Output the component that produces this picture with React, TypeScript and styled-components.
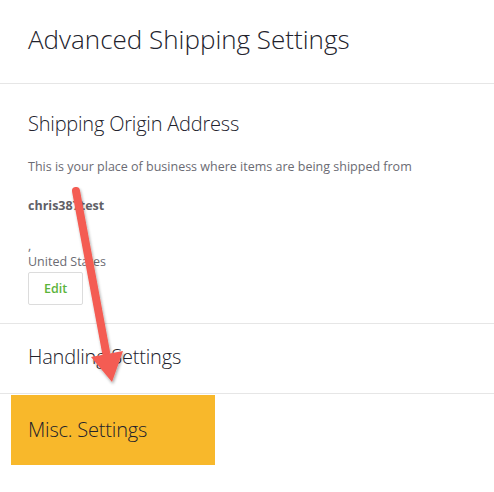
import React, { FC } from 'react';
import styled, { createGlobalStyle } from 'styled-components';

const GlobalStyle = createGlobalStyle`
  html, body {
    margin: 0;
    padding: 0;
    background: #ffffff;
  }
  body {
    font-family: 'Open Sans', 'Noto Sans', sans-serif;
    color: #2b2b36;
  }
`;

const Page = styled.div`
  position: relative;
  width: 494px;
  height: 492px;
  overflow: hidden;
  background: #ffffff;
`;

const Header = styled.header`
  height: 84px;
  box-sizing: border-box;
  padding: 22px 28px 0;
  border-bottom: 1px solid #e6e6e6;
`;

const Title = styled.h1`
  margin: 0;
  font-size: 26px;
  font-weight: 300;
  line-height: 34px;
  letter-spacing: 0;
  color: #22222c;
`;

const Section = styled.section<{ $height: number }>`
  height: ${p => p.$height}px;
  box-sizing: border-box;
  padding: 0 28px;
  border-bottom: 1px solid #e6e6e6;
  display: flex;
  flex-direction: column;
`;

const SectionTitle = styled.h2`
  margin: 0;
  font-size: 20px;
  font-weight: 300;
  line-height: 28px;
  letter-spacing: -0.2px;
  color: #22222c;
`;

const Description = styled.p`
  margin: 20px 0 0;
  font-size: 12.5px;
  line-height: 18px;
  color: #6b6b73;
`;

const Company = styled.div`
  margin-top: 21px;
  font-size: 12.5px;
  font-weight: 700;
  line-height: 18px;
  color: #606066;
`;

const AddressLine = styled.div`
  font-size: 12.5px;
  line-height: 16px;
  color: #6b6b73;
`;

const EditButton = styled.button`
  width: 55px;
  height: 33px;
  margin-top: 2px;
  padding: 0;
  background: #ffffff;
  border: 1px solid #dcdcdc;
  border-radius: 2px;
  font-family: inherit;
  font-size: 12.5px;
  font-weight: 600;
  color: #5cb43b;
`;

const MiscItem = styled.div`
  width: 204px;
  height: 70px;
  margin: 1px 0 0 11px;
  box-sizing: border-box;
  padding: 0 17px;
  background: #f8b82b;
  display: flex;
  align-items: center;
`;

const ArrowLayer = styled.svg`
  position: absolute;
  left: 0;
  top: 0;
  pointer-events: none;
`;

const Arrow: FC = () => (
  <ArrowLayer width={494} height={492} viewBox="0 0 494 492">
    <defs>
      <filter id="shadow" x="-50%" y="-50%" width="200%" height="200%">
        <feDropShadow dx="1" dy="2" stdDeviation="1.5" floodColor="#000" floodOpacity="0.35" />
      </filter>
    </defs>
    <g filter="url(#shadow)">
      <line x1={76} y1={191} x2={106} y2={352} stroke="#f45b52" strokeWidth={8} strokeLinecap="round" />
      <polygon points="91,357 123,351 112,382" fill="#f45b52" />
    </g>
  </ArrowLayer>
);

const App: FC = () => (
  <Page>
    <GlobalStyle />
    <Header>
      <Title>Advanced Shipping Settings</Title>
    </Header>
    <Section $height={240}>
      <SectionTitle style={{ marginTop: 26 }}>Shipping Origin Address</SectionTitle>
      <Description>This is your place of business where items are being shipped from</Description>
      <Company>chris387test</Company>
      <AddressLine style={{ marginTop: 23 }}>,</AddressLine>
      <AddressLine>United States</AddressLine>
      <EditButton>Edit</EditButton>
    </Section>
    <Section $height={70}>
      <SectionTitle style={{ marginTop: 19 }}>Handling Settings</SectionTitle>
    </Section>
    <MiscItem>
      <SectionTitle>Misc. Settings</SectionTitle>
    </MiscItem>
    <Arrow />
  </Page>
);

export default App;
